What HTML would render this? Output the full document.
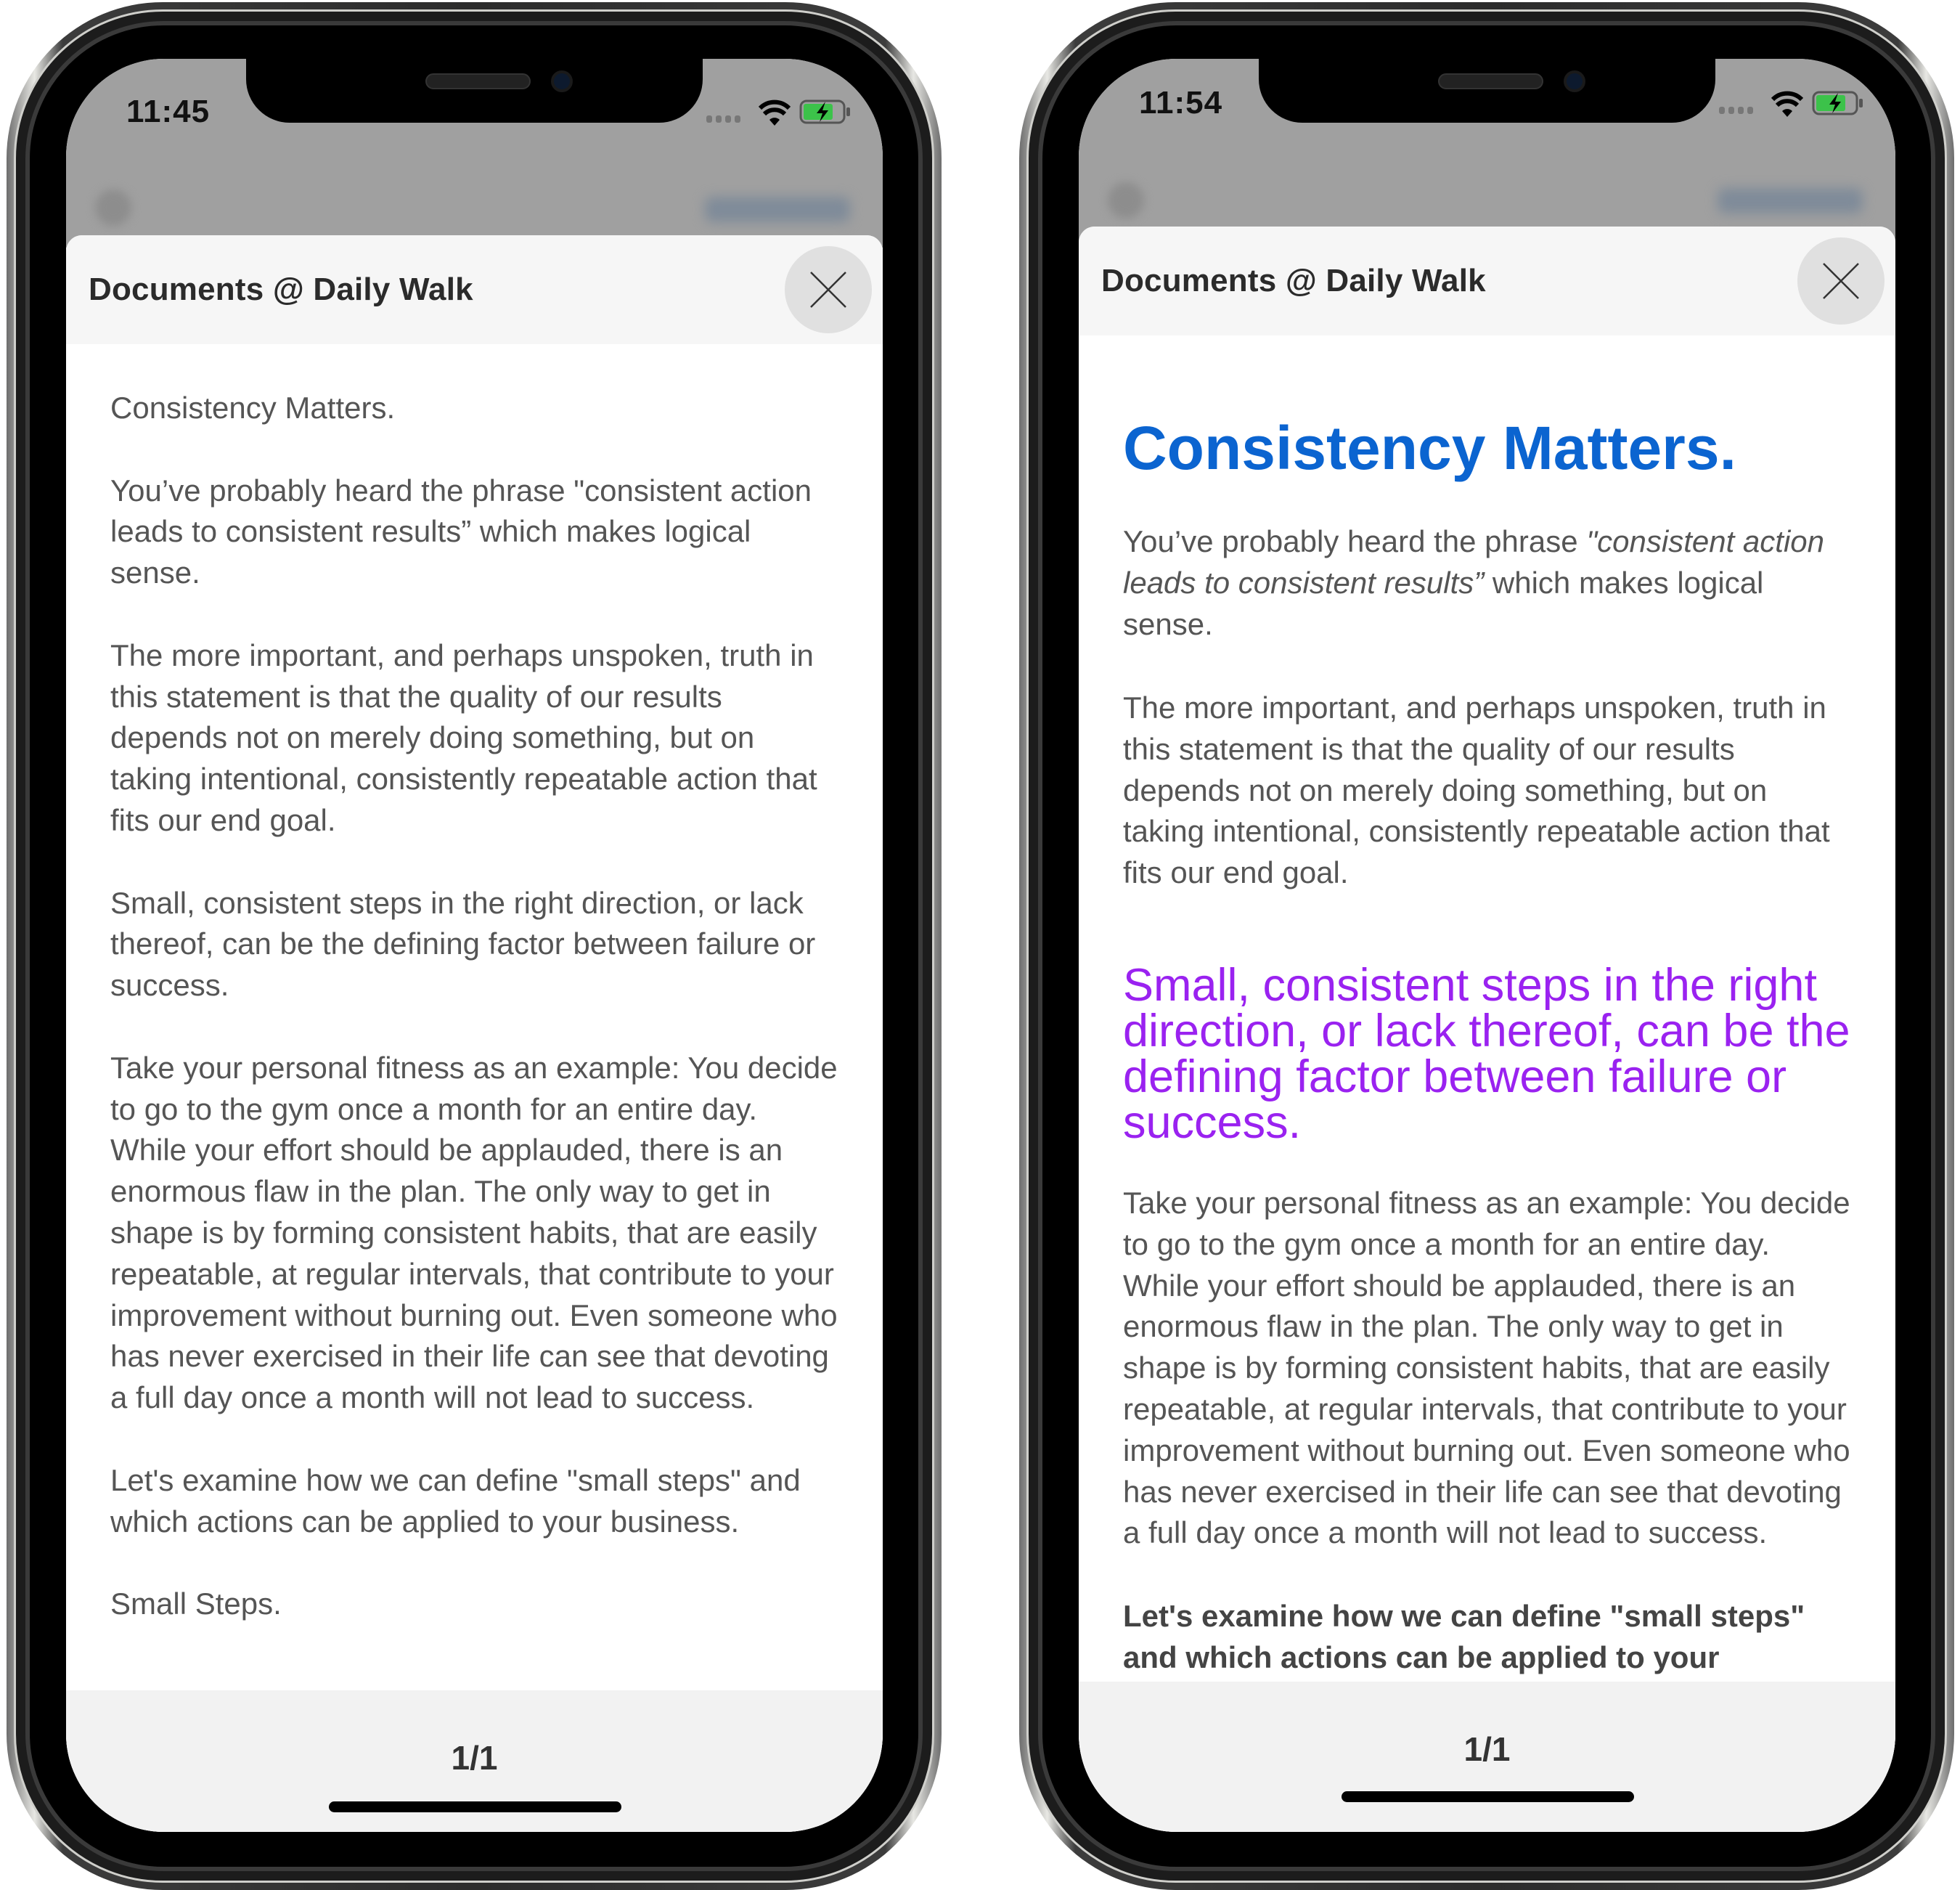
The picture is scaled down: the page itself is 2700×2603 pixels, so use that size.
<!DOCTYPE html>
<html><head><meta charset="utf-8">
<style>
*{margin:0;padding:0;box-sizing:border-box}
body{width:2700px;height:2603px;background:#fff;position:relative;overflow:hidden;font-family:"Liberation Sans",Arial,sans-serif}
.phone{position:absolute;top:3px;width:1288px;height:2600px}
.f1{position:absolute;inset:0;border-radius:215px;background:linear-gradient(90deg,#6d6d6d,#e8e8e4 3%,#3c3c3c 6%,#2c2c2c 50%,#3c3c3c 94%,#e8e8e4 97%,#6d6d6d)}
.f2{position:absolute;inset:10px;border-radius:205px;background:#1c1c1c;border:3px solid #cfcfcb}
.f3{position:absolute;inset:26px;border-radius:190px;background:#000;border:6px solid #3a3a3a}
.screen{position:absolute;left:82px;top:78px;width:1125px;height:2442px;border-radius:135px;overflow:hidden;background:#fff}
.gray{position:absolute;left:0;top:0;width:100%;height:260px;background:#a0a0a0}
.notch{position:absolute;left:248px;top:-10px;width:629px;height:98px;background:#000;border-radius:0 0 60px 60px}
.spk{position:absolute;left:247px;top:30px;width:145px;height:22px;border-radius:11px;background:#222;border:2px solid #333}
.cam{position:absolute;left:420px;top:26px;width:30px;height:30px;border-radius:50%;background:#0d1a2e;border:4px solid #1a1a1a}
.time{position:absolute;left:83px;font-size:44px;font-weight:bold;color:#111;letter-spacing:1px}
.dots{position:absolute;left:882px;display:flex;gap:5px}
.dots i{width:8px;height:10px;border-radius:3px;background:#777;display:block}
.blur1{position:absolute;left:40px;top:180px;width:50px;height:50px;border-radius:50%;background:#8d8d8d;filter:blur(6px)}
.blur2{position:absolute;left:880px;top:190px;width:200px;height:35px;border-radius:10px;background:#7f8b99;filter:blur(8px)}
.sheet{position:absolute;left:0;width:100%;bottom:0;background:#fff;border-radius:22px 22px 0 0;overflow:hidden}
.hdr{position:absolute;left:0;top:0;width:100%;height:150px;background:#f6f6f6}
.title{position:absolute;left:31px;top:0;line-height:150px;font-size:44px;font-weight:bold;color:#2b2b2b;letter-spacing:0.2px}
.close{position:absolute;left:990px;top:15px;width:120px;height:120px;border-radius:50%;background:#e0e0e0}
.body{position:absolute;left:61px;font-size:42px;line-height:56.8px;color:#555;white-space:nowrap}
.foot{position:absolute;left:0;width:100%;bottom:0;background:#f2f2f2}
.pg{position:absolute;left:0;width:100%;text-align:center;font-size:46px;font-weight:bold;color:#333}
.home{position:absolute;left:362px;width:403px;height:15px;border-radius:8px;background:#000}
</style></head><body>

<div class="phone" style="left:9px">
 <div class="f1"></div><div class="f2"></div><div class="f3"></div>
 <div class="screen">
  <div class="gray"></div>
  <div class="blur1"></div><div class="blur2"></div>
  <div class="time" style="top:48px">11:45</div>
  <div class="dots" style="top:78px"><i></i><i></i><i></i><i></i></div>
  <svg style="position:absolute;left:954px;top:56px" width="44" height="38" viewBox="0 0 44 38"><path d="M22 36 L29 28 A10 10 0 0 0 15 28 Z" fill="#000"/><path d="M8 20 A20 20 0 0 1 36 20" stroke="#000" stroke-width="6" fill="none"/><path d="M2 12 A28 28 0 0 1 42 12" stroke="#000" stroke-width="6" fill="none"/></svg>
  <svg style="position:absolute;left:1010px;top:56px" width="72" height="34" viewBox="0 0 72 34"><rect x="2" y="2" width="60" height="30" rx="8" fill="none" stroke="#555" stroke-width="3"/><rect x="6" y="6" width="40" height="22" rx="3" fill="#3cc24a"/><rect x="65" y="11" width="5" height="12" rx="2" fill="#555"/><path d="M36 3 L24 19 L32 19 L28 31 L40 15 L32 15 Z" fill="#000"/></svg>
  <div class="notch"><div class="spk"></div><div class="cam"></div></div>
  <div class="sheet" style="top:243px">
   <div class="hdr"><div class="title">Documents @ Daily Walk</div>
    <div class="close"><svg width="120" height="120" viewBox="0 0 120 120"><path d="M36 36 L84 84 M84 36 L36 84" stroke="#333" stroke-width="2.5"/></svg></div></div>
   <div class="body" style="top:210px">Consistency Matters.<br><br>You’ve probably heard the phrase "consistent action<br>leads to consistent results” which makes logical<br>sense.<br><br>The more important, and perhaps unspoken, truth in<br>this statement is that the quality of our results<br>depends not on merely doing something, but on<br>taking intentional, consistently repeatable action that<br>fits our end goal.<br><br>Small, consistent steps in the right direction, or lack<br>thereof, can be the defining factor between failure or<br>success.<br><br>Take your personal fitness as an example: You decide<br>to go to the gym once a month for an entire day.<br>While your effort should be applauded, there is an<br>enormous flaw in the plan. The only way to get in<br>shape is by forming consistent habits, that are easily<br>repeatable, at regular intervals, that contribute to your<br>improvement without burning out. Even someone who<br>has never exercised in their life can see that devoting<br>a full day once a month will not lead to success.<br><br>Let's examine how we can define "small steps" and<br>which actions can be applied to your business.<br><br>Small Steps.</div>
  </div>
  <div class="foot" style="top:2247px">
   <div class="pg" style="top:66px">1/1</div>
   <div class="home" style="top:153px"></div>
  </div>
 </div>
</div>

<div class="phone" style="left:1404px">
 <div class="f1"></div><div class="f2"></div><div class="f3"></div>
 <div class="screen">
  <div class="gray"></div>
  <div class="blur1" style="top:170px"></div><div class="blur2" style="top:178px"></div>
  <div class="time" style="top:36px">11:54</div>
  <div class="dots" style="top:66px"><i></i><i></i><i></i><i></i></div>
  <svg style="position:absolute;left:954px;top:44px" width="44" height="38" viewBox="0 0 44 38"><path d="M22 36 L29 28 A10 10 0 0 0 15 28 Z" fill="#000"/><path d="M8 20 A20 20 0 0 1 36 20" stroke="#000" stroke-width="6" fill="none"/><path d="M2 12 A28 28 0 0 1 42 12" stroke="#000" stroke-width="6" fill="none"/></svg>
  <svg style="position:absolute;left:1010px;top:44px" width="72" height="34" viewBox="0 0 72 34"><rect x="2" y="2" width="60" height="30" rx="8" fill="none" stroke="#555" stroke-width="3"/><rect x="6" y="6" width="40" height="22" rx="3" fill="#3cc24a"/><rect x="65" y="11" width="5" height="12" rx="2" fill="#555"/><path d="M36 3 L24 19 L32 19 L28 31 L40 15 L32 15 Z" fill="#000"/></svg>
  <div class="notch"><div class="spk"></div><div class="cam"></div></div>
  <div class="sheet" style="top:231px">
   <div class="hdr"><div class="title">Documents @ Daily Walk</div>
    <div class="close"><svg width="120" height="120" viewBox="0 0 120 120"><path d="M36 36 L84 84 M84 36 L36 84" stroke="#333" stroke-width="2.5"/></svg></div></div>
   <div class="body" style="top:260px;font-size:84px;line-height:90px;font-weight:bold;color:#0b64d0">Consistency Matters.</div>
   <div class="body" style="top:406px">You’ve probably heard the phrase <i>"consistent action<br>leads to consistent results”</i> which makes logical<br>sense.</div>
   <div class="body" style="top:635px">The more important, and perhaps unspoken, truth in<br>this statement is that the quality of our results<br>depends not on merely doing something, but on<br>taking intentional, consistently repeatable action that<br>fits our end goal.</div>
   <div class="body" style="top:1014px;font-size:63px;line-height:63px;color:#9a22f0">Small, consistent steps in the right<br>direction, or lack thereof, can be the<br>defining factor between failure or<br>success.</div>
   <div class="body" style="top:1317px">Take your personal fitness as an example: You decide<br>to go to the gym once a month for an entire day.<br>While your effort should be applauded, there is an<br>enormous flaw in the plan. The only way to get in<br>shape is by forming consistent habits, that are easily<br>repeatable, at regular intervals, that contribute to your<br>improvement without burning out. Even someone who<br>has never exercised in their life can see that devoting<br>a full day once a month will not lead to success.</div>
   <div class="body" style="top:1886px;font-weight:bold;color:#444">Let's examine how we can define "small steps"<br>and which actions can be applied to your</div>
  </div>
  <div class="foot" style="top:2235px">
   <div class="pg" style="top:66px">1/1</div>
   <div class="home" style="top:151px"></div>
  </div>
 </div>
</div>

</body></html>
